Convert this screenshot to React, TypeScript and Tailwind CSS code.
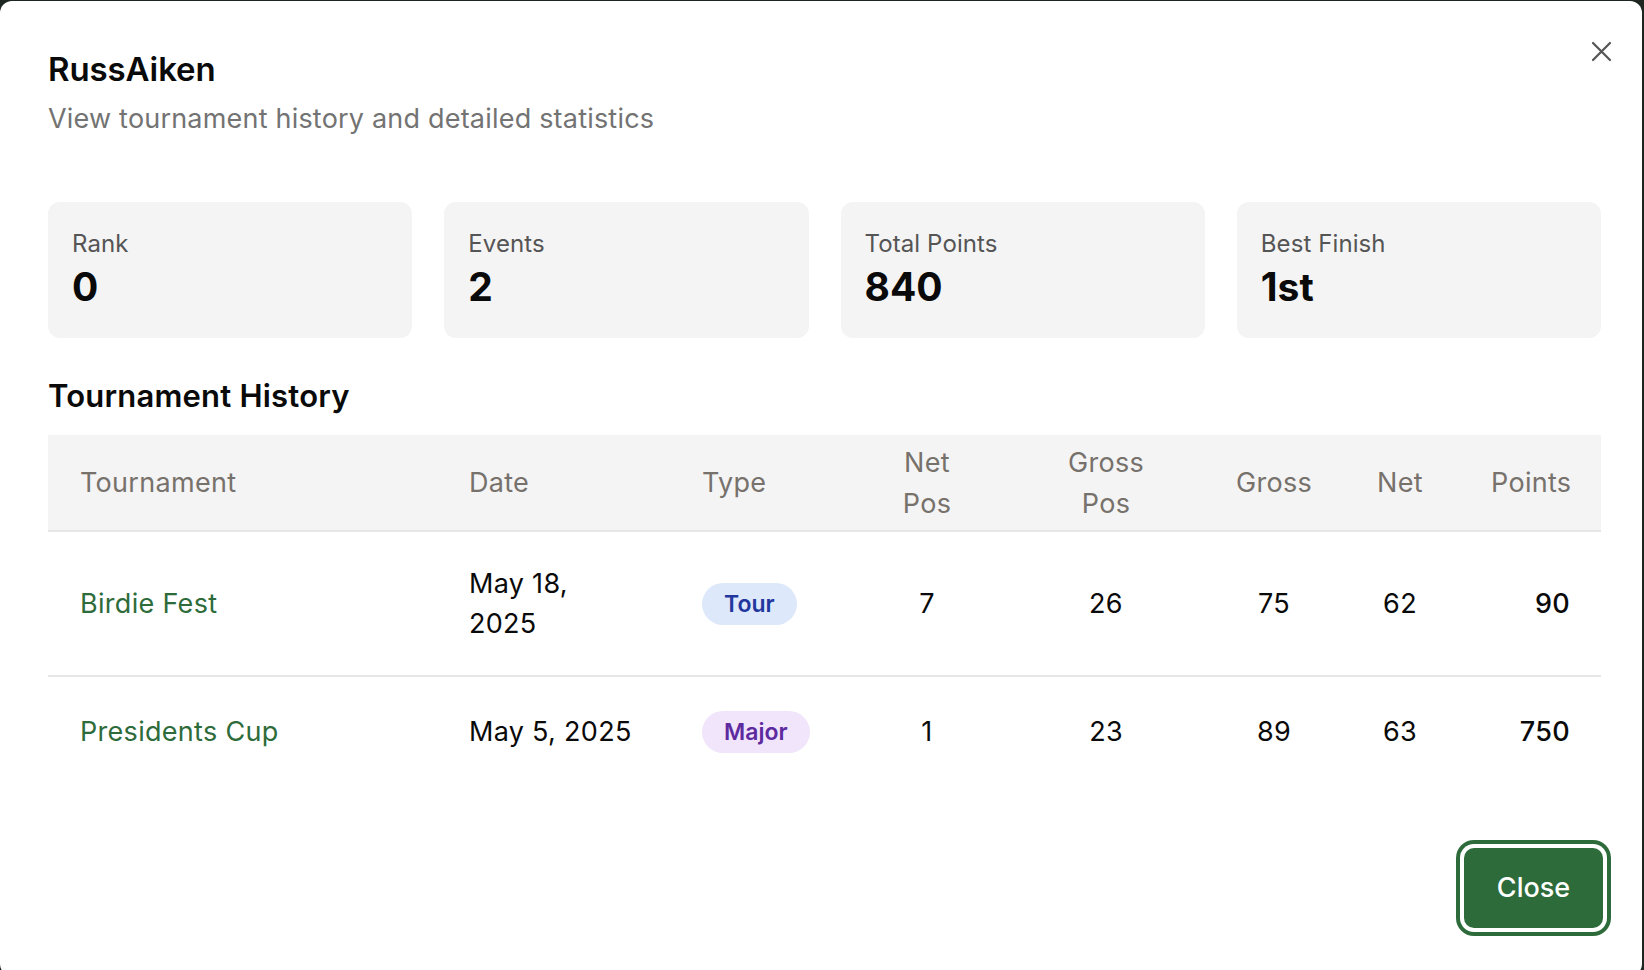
import React from "react";

const rows = [
  { name: "Birdie Fest", date: ["May 18,", "2025"], type: "Tour", netPos: 7, grossPos: 26, gross: 75, net: 62, points: 90 },
  { name: "Presidents Cup", date: ["May 5, 2025"], type: "Major", netPos: 1, grossPos: 23, gross: 89, net: 63, points: 750 },
];

function Stat({ label, value }: { label: string; value: string }) {
  return (
    <div className="h-[136px] rounded-[12px] bg-[#f4f4f4] pl-[24px] pt-[26px]">
      <div className="text-[24px] leading-[32px] tracking-[0.1px] text-[#555555]">{label}</div>
      <div className="mt-[4px] text-[39px] font-bold leading-[46px] text-[#0a0a0a]">{value}</div>
    </div>
  );
}

export default function App() {
  return (
    <div className="h-[970px] w-full overflow-hidden bg-[#1d2620] pt-[1px]" style={{ fontFamily: "Inter, 'Noto Sans', sans-serif" }}>
      <div className="relative h-[975px] w-[1642px] rounded-[12px] bg-white pl-[48px] pr-[39px] pt-[48px]">
        <button className="absolute right-[30px] top-[40px] text-[#555555]" aria-label="Close">
          <svg width="21" height="21" viewBox="0 0 21 21" fill="none" stroke="currentColor" strokeWidth="2.2" strokeLinecap="round">
            <path d="M2 2L19 19M19 2L2 19" />
          </svg>
        </button>
        <h2 className="text-[33px] font-semibold leading-[40px] tracking-[-0.1px] text-[#0a0a0a]">RussAiken</h2>
        <p className="mt-[12px] text-[27px] leading-[36px] tracking-[0.2px] text-[#737373]">View tournament history and detailed statistics</p>

        <div className="mt-[65px] grid grid-cols-4 gap-[32px] pr-[2px]">
          <Stat label="Rank" value="0" />
          <Stat label="Events" value="2" />
          <Stat label="Total Points" value="840" />
          <Stat label="Best Finish" value="1st" />
        </div>

        <h3 className="mt-[40px] text-[31px] font-semibold leading-[36px] tracking-[0.2px] text-[#0a0a0a]">Tournament History</h3>

        <table className="mt-[21px] w-[1553px] table-fixed border-collapse">
          <colgroup>
            <col className="w-[389px]" />
            <col className="w-[233px]" />
            <col className="w-[180px]" />
            <col className="w-[154px]" />
            <col className="w-[204px]" />
            <col className="w-[132px]" />
            <col className="w-[120px]" />
            <col className="w-[141px]" />
          </colgroup>
          <thead>
            <tr className="h-[96px] border-b-2 border-[#e6e6e6] bg-[#f4f4f4] text-[27px] font-normal leading-[41px] tracking-[0.3px] text-[#77716c]">
              <th className="px-[32px] text-left font-normal">Tournament</th>
              <th className="px-[32px] text-left font-normal">Date</th>
              <th className="px-[32px] text-left font-normal">Type</th>
              <th className="px-[16px] text-center font-normal">Net<br />Pos</th>
              <th className="px-[16px] text-center font-normal">Gross<br />Pos</th>
              <th className="px-[16px] text-center font-normal">Gross</th>
              <th className="px-[16px] text-center font-normal">Net</th>
              <th className="px-[31px] text-right font-normal">Points</th>
            </tr>
          </thead>
          <tbody className="text-[27px] leading-[40px] tracking-[0.3px] text-[#0a0a0a]">
            {rows.map((r, i) => (
              <tr key={r.name} className={i === 0 ? "h-[145px] border-b-2 border-[#e6e6e6]" : "h-[111px]"}>
                <td className="px-[32px] text-[#2e6b3a]">{r.name}</td>
                <td className="px-[32px]">
                  {r.date.map((d) => (
                    <div key={d}>{d}</div>
                  ))}
                </td>
                <td className="px-[32px]">
                  {r.type === "Tour" ? (
                    <span className="inline-flex h-[42px] items-center rounded-full bg-[#dde8fb] px-[22px] text-[23px] font-semibold tracking-normal text-[#22379e]">Tour</span>
                  ) : (
                    <span className="inline-flex h-[42px] items-center rounded-full bg-[#f1e5fb] px-[22px] text-[23px] font-semibold tracking-normal text-[#5d2a9f]">Major</span>
                  )}
                </td>
                <td className="px-[16px] text-center">{r.netPos}</td>
                <td className="px-[16px] text-center">{r.grossPos}</td>
                <td className="px-[16px] text-center">{r.gross}</td>
                <td className="px-[16px] text-center">{r.net}</td>
                <td className="px-[31px] text-right font-medium">{r.points}</td>
              </tr>
            ))}
          </tbody>
        </table>

        <div className="mt-[61px] flex justify-end">
          <button className="h-[80px] w-[139px] rounded-[10px] bg-[#2e6b3a] text-[27px] font-medium text-white ring-[4px] ring-[#2e6b3a] ring-offset-[4px] ring-offset-white">
            Close
          </button>
        </div>
      </div>
    </div>
  );
}
